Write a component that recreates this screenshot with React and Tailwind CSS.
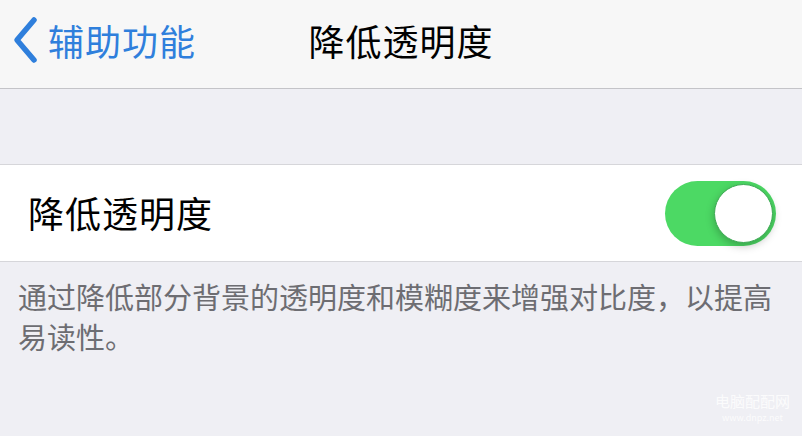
import React from "react";

const font = { fontFamily: '"Noto Sans CJK SC", "Noto Sans", sans-serif' };

function BackChevron() {
    return (
        <svg width="28" height="48" viewBox="0 0 28 48" fill="none">
            <path
                d="M22 4 L5 24 L22 44"
                stroke="#2f7fdc"
                strokeWidth="5.5"
                strokeLinecap="round"
                strokeLinejoin="round"
            />
        </svg>
    );
}

export default function App() {
    return (
        <div className="w-[802px] h-[436px] bg-[#efeff4] overflow-hidden relative" style={font}>
            {/* nav bar */}
            <div className="h-[89px] bg-[#f7f7f7] border-b border-[#c4c4c8] flex items-center pb-[8px] relative">
                <div className="flex items-center pl-[12px]">
                    <BackChevron />
                    <span className="ml-[8px] text-[36px] leading-none text-[#2f7fdc] tracking-[1px]">辅助功能</span>
                </div>
                <div className="absolute left-0 right-0 top-0 bottom-[8px] flex items-center justify-center pointer-events-none">
                    <span className="text-[36px] leading-none text-black tracking-[1px]">降低透明度</span>
                </div>
            </div>

            {/* spacer */}
            <div className="h-[75px]" />

            {/* setting row */}
            <div className="h-[98px] bg-white border-y border-[#d6d6da] flex items-center justify-between pl-[28px] pr-[26px]">
                <span className="text-[36px] leading-none text-black tracking-[1px] mt-[-2px]">降低透明度</span>
                <div className="w-[111px] h-[65px] rounded-full bg-[#4cd964] relative">
                    <div className="absolute right-[3px] top-[3px] w-[59px] h-[59px] rounded-full bg-white shadow-[0_3px_8px_rgba(0,0,0,0.25)] border border-[#3eaa55]" />
                </div>
            </div>

            {/* footer text */}
            <div className="pl-[18px] pr-[20px] pt-[14px] text-[29px] leading-[40px] text-[#6d6d72]">
                通过降低部分背景的透明度和模糊度来增强对比度，以提高易读性。
            </div>

            {/* watermark */}
            <div className="absolute right-[12px] bottom-[14px] flex flex-col items-center text-white opacity-80">
                <span className="text-[15px] leading-none">电脑配配网</span>
                <span className="text-[9px] leading-none mt-[5px]">www.dnpz.net</span>
            </div>
        </div>
    );
}
